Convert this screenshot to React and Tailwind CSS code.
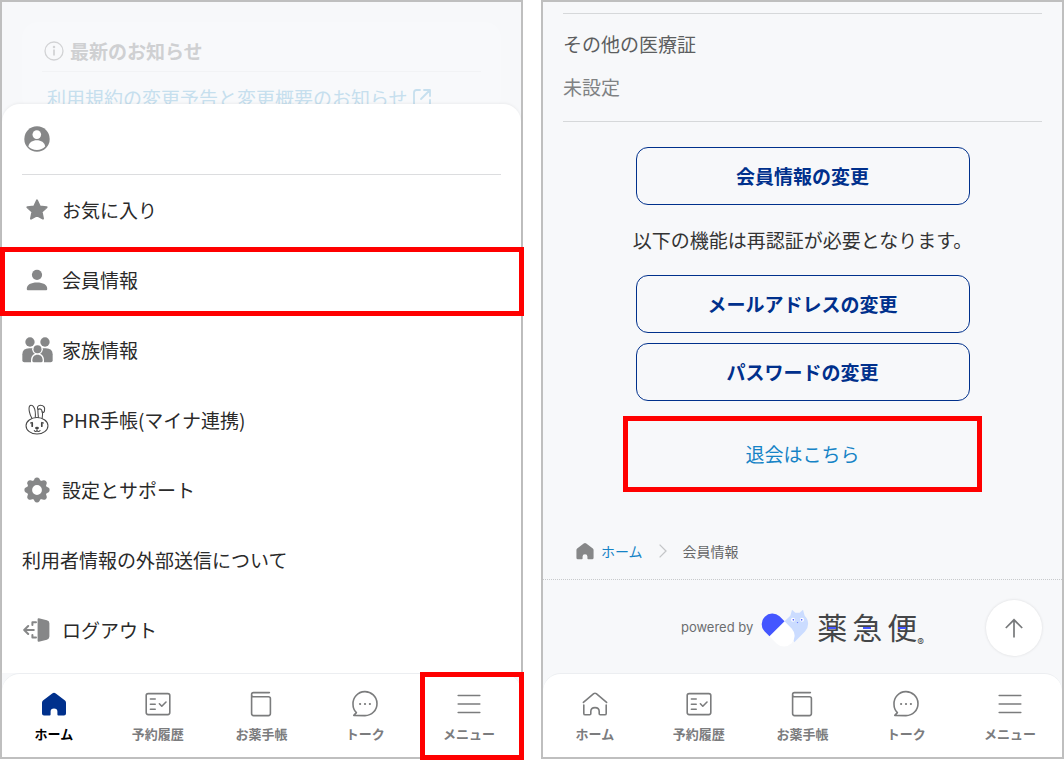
import { clsx } from "clsx";

/* Menu icons */
function AccountIcon() {
  return (
    <svg viewBox="0 0 28 28" className="w-7 h-7" fill="#868788">
      <circle cx="14" cy="14" r="12.7" />
      <circle cx="13.8" cy="9.6" r="4.3" fill="#fff" />
      <path d="M5.4 21.4C6 17.4 9.6 15.2 13.8 15.2S21.6 17.4 22.2 21.4C20.2 23.6 17.2 24.9 13.8 24.9S7.4 23.6 5.4 21.4Z" fill="#fff" />
    </svg>
  );
}

function StarIcon() {
  return (
    <svg viewBox="0 0 28 28" className="w-7 h-7" fill="#868788" stroke="#868788" strokeWidth="2" strokeLinejoin="round">
      <path d="M14 4.4L16.8 10.4L23.6 11.2L18.6 15.8L20 22.6L14 19.4L8 22.6L9.4 15.8L4.4 11.2L11.2 10.4Z" />
    </svg>
  );
}

function PersonIcon() {
  return (
    <svg viewBox="0 0 28 28" className="w-7 h-7" fill="#868788">
      <circle cx="14" cy="8.8" r="5.1" />
      <path d="M3.8 22.4C3.8 18.6 8 16.4 14 16.4S24.2 18.6 24.2 22.4V23.2Q24.2 24.2 23.2 24.2H4.8Q3.8 24.2 3.8 23.2Z" />
    </svg>
  );
}

function FamilyIcon() {
  return (
    <svg viewBox="0 0 93 78" className="w-[31px] h-[26px] shrink-0" fill="#868788">
      <circle cx="24" cy="15" r="14" />
      <circle cx="69" cy="15" r="14" />
      <path d="M1 70V52Q1 34 22 34H40V76H7Q1 76 1 70Z" />
      <path d="M92 70V52Q92 34 71 34H53V76H86Q92 76 92 70Z" />
      <circle cx="46.5" cy="37" r="16" fill="#fff" />
      <path d="M27 78V70C27 56 36 49 46.5 49S66 56 66 70V78Z" fill="#fff" />
      <circle cx="46.5" cy="37" r="12" />
      <path d="M31 71C31 59 37 53 46.5 53S62 59 62 71Q62 76 57 76H36Q31 76 31 71Z" />
    </svg>
  );
}

function RabbitIcon() {
  return (
    <svg viewBox="-2 -1 70 92" className="w-6 h-8" fill="none" stroke="#444" strokeWidth="3" strokeLinecap="round" strokeLinejoin="round">
      <path d="M18 40C11 28 8 12 11 5Q14 0 20 3C27 9 29 24 28 37" />
      <path d="M37 37C36 27 35 17 36 14Q44 10 47 17C50 24 50 32 48 40" />
      <path d="M36 14C32 8 36 2 43 2C52 2 57 8 55 17Q54 26 48 21" />
      <ellipse cx="33" cy="62" rx="32" ry="24" />
      <path d="M19 54V63M47 54V63" strokeWidth="5" />
      <path d="M14 54L19 52M47 52L52 54M33 70V75M25 76Q29 81 33 76Q37 81 42 76" />
      <ellipse cx="33" cy="68" rx="4" ry="2" fill="#444" />
    </svg>
  );
}

const teeth = [0, 45, 90, 135, 180, 225, 270, 315];

function GearIcon() {
  return (
    <svg viewBox="0 0 28 28" className="w-7 h-7" fill="#868788">
      {teeth.map((deg) => (
        <path key={deg} d="M9.8 6L11.8 2.4Q12.4 1.4 14 1.4T16.2 2.4L18.2 6Z" transform={`rotate(${deg} 14 14)`} />
      ))}
      <circle cx="14" cy="14" r="7.4" fill="none" stroke="#868788" strokeWidth="5" />
    </svg>
  );
}

function LogoutIcon() {
  return (
    <svg viewBox="0 0 28 28" className="w-7 h-7" fill="none" stroke="#868788" strokeWidth="2" strokeLinecap="round" strokeLinejoin="round">
      <path d="M10.8 14H1.6M5.2 10L1.2 14L5.2 18" />
      <path d="M9.4 9V6.2H13M9.4 19V21.6H13" />
      <path d="M15.6 3.2V24.8L23.6 22.8Q25.4 22.2 25.4 20.6V7.2Q25.4 5.6 23.6 5.1Z" fill="#868788" />
    </svg>
  );
}

/* Notice icons */
function InfoIcon() {
  return (
    <svg viewBox="0 0 20 20" className="w-5 h-5" fill="none" stroke="#d2d3d5" strokeWidth="1.3">
      <circle cx="10" cy="10" r="9" />
      <path d="M10 8.6V14.6" strokeWidth="1.8" />
      <circle cx="10" cy="6" r="0.6" />
    </svg>
  );
}

function ExternalIcon() {
  return (
    <svg viewBox="0 0 20 20" className="w-5 h-5" fill="none" stroke="#c6dfee" strokeWidth="1.8" strokeLinecap="round" strokeLinejoin="round">
      <path d="M8 2H4.5Q2 2 2 4.5V15.5Q2 18 4.5 18H15.5Q18 18 18 15.5V12" />
      <path d="M12 2H18V8M18 2L9 11" />
    </svg>
  );
}

/* Bottom navigation icons */
function HomeFillIcon({ className }) {
  return (
    <svg viewBox="0 0 28 28" className={className} fill="currentColor">
      <path d="M12.2 3.5Q14 2 15.8 3.5L25 10.6Q26 11.5 26 12.7V23.5Q26 25.6 24 25.6H18.4Q17.4 25.6 17.4 24.6V21.6Q17.4 18.4 14 18.4T10.6 21.6V24.6Q10.6 25.6 9.6 25.6H4Q2 25.6 2 23.5V12.7Q2 11.5 3 10.6Z" />
    </svg>
  );
}

const lineProps = {
  viewBox: "0 0 28 28",
  className: "w-7 h-7",
  fill: "none",
  stroke: "#7b7c7d",
  strokeWidth: "1.6",
  strokeLinecap: "round",
  strokeLinejoin: "round",
};

function HomeLineIcon() {
  return (
    <svg {...lineProps}>
      <path d="M2.4 12.4L12.7 3.7Q14 2.7 15.3 3.7L25.6 12.4" />
      <path d="M2.8 15V23.4Q2.8 24.8 4.2 24.8H8.8Q9.8 24.8 9.8 23.8V21.6Q9.8 17.6 14 17.6T18.2 21.6V23.8Q18.2 24.8 19.2 24.8H23.8Q25.2 24.8 25.2 23.4V15" />
    </svg>
  );
}

function HistoryIcon() {
  return (
    <svg {...lineProps}>
      <rect x="2.2" y="3.6" width="23.6" height="21" rx="2" />
      <path d="M6.4 9H11.2M6.4 14.2H11.2M6.4 19.2H11.2M15.4 13.8L17.8 16.2L22 12" />
    </svg>
  );
}

function NotebookIcon() {
  return (
    <svg {...lineProps}>
      <path d="M22.4 2.6H6.4Q4.6 2.6 4.6 4.6V23.6Q4.6 25.6 6.6 25.6H21.4Q23.4 25.6 23.4 23.6V8.6Q23.4 6.8 21.4 6.8H6.4Q4.6 6.8 4.6 4.8" />
    </svg>
  );
}

function TalkIcon() {
  return (
    <svg {...lineProps}>
      <path d="M2.8 25.4L5.4 22.6C3 20.4 2 17.4 2 14.2A12 12 0 1 1 14 25.6Z" />
      <path d="M9 14H9.2M13.9 14H14.1M18.8 14H19" strokeWidth="2" />
    </svg>
  );
}

function MenuIcon() {
  return (
    <svg {...lineProps}>
      <path d="M3.2 5.5H24.8M3.2 14H24.8M3.2 22.5H24.8" />
    </svg>
  );
}

function Mascot() {
  return (
    <svg viewBox="0 0 144 116" className="w-12 h-[39px]">
      <path d="M70 37L88 20L93 2L103 11H116L126 2L131 20A33 33 0 0 1 132 67L100 99Z" fill="#cbdcff" />
      <path d="M25.4 81.6L70.6 36.4L92.6 58.4A32 32 0 0 1 47.4 103.6Z" fill="#fff" />
      <path d="M25.4 81.6L10.4 66.6A32 32 0 0 1 55.6 21.4L70.6 36.4Z" fill="#4456ff" />
      <circle cx="96" cy="32" r="6" fill="#fff" />
      <circle cx="123" cy="32" r="6" fill="#fff" />
      <circle cx="97" cy="32" r="2.5" fill="#4456ff" />
      <circle cx="122" cy="32" r="2.5" fill="#4456ff" />
      <path d="M107 39H112L109.5 42Z" fill="#4456ff" />
    </svg>
  );
}

const menuItems = [
  { label: "お気に入り", Icon: StarIcon },
  { label: "会員情報", Icon: PersonIcon, marked: true },
  { label: "家族情報", Icon: FamilyIcon },
  { label: "PHR手帳(マイナ連携)", Icon: RabbitIcon },
  { label: "設定とサポート", Icon: GearIcon },
  { label: "利用者情報の外部送信について" },
  { label: "ログアウト", Icon: LogoutIcon },
];

const tabs = [
  { label: "ホーム", Icon: HomeLineIcon },
  { label: "予約履歴", Icon: HistoryIcon },
  { label: "お薬手帳", Icon: NotebookIcon },
  { label: "トーク", Icon: TalkIcon },
  { label: "メニュー", Icon: MenuIcon },
];

function BottomNav({ homeActive, markMenu }) {
  return (
    <nav className="relative mt-auto grid grid-cols-5 h-[84px] bg-white border-t border-[#eceef1] rounded-t-[18px]">
      {tabs.map(({ label, Icon }, i) => {
        const active = homeActive && i === 0;
        return (
          <a
            key={label}
            href="#"
            className={clsx(
              "relative flex flex-col items-center gap-1 pt-4 text-[13px] leading-6 font-bold whitespace-nowrap",
              active ? "text-black" : "text-[#7b7c7e]"
            )}
          >
            {active ? <HomeFillIcon className="w-7 h-7 text-[#00308c]" /> : <Icon />}
            {label}
            {markMenu && i === 4 && (
              <span className="absolute left-[3px] -right-[3px] -top-[2px] -bottom-[3px] border-5 border-[#ff0000]" />
            )}
          </a>
        );
      })}
    </nav>
  );
}

function OutlineButton({ children }) {
  return (
    <button
      type="button"
      className="w-[334px] h-[58px] rounded-xl border border-[#00308c] text-[19px] leading-7 font-bold text-[#00308c]"
    >
      {children}
    </button>
  );
}

function MenuScreen() {
  return (
    <section className="flex flex-col border-2 border-[#bfbfbf] bg-[#f7f8fa]">
      {/* Dimmed notice, partly under the sheet */}
      <div className="h-[102px] px-5 pt-5">
        <div className="rounded-2xl bg-[#f8f9fb] px-5 pt-[9px]">
          <h2 className="flex items-center gap-[6px] h-[41px] border-b border-[#f2f3f5] pl-[2px] text-[19px] leading-7 font-bold text-[#cfd0d2]">
            <InfoIcon />
            最新のお知らせ
          </h2>
          <a href="#" className="mt-3 flex items-center gap-1 pl-[5px] text-[19px] leading-7 text-[#c6dfee] whitespace-nowrap">
            利用規約の変更予告と変更概要のお知らせ
            <ExternalIcon />
          </a>
        </div>
      </div>

      {/* Menu sheet */}
      <div className="relative rounded-t-[18px] bg-white px-5 pb-2 shadow-[0_-1px_3px_rgba(0,0,0,0.05)]">
        <div className="h-[71px] border-b border-[#dcdddf] flex items-center pl-[1px]">
          <AccountIcon />
        </div>
        <ul>
          {menuItems.map(({ label, Icon, marked }) => (
            <li key={label} className="relative">
              <a href="#" className="flex items-center gap-[10px] h-[70px] text-[19px] leading-7 text-[#2a2a2a]">
                {Icon && (
                  <span className="w-[30px] flex justify-center shrink-0">
                    <Icon />
                  </span>
                )}
                {label}
              </a>
              {marked && (
                <span className="pointer-events-none absolute -left-[22px] -right-[23px] top-[2px] -bottom-[1px] border-5 border-[#ff0000]" />
              )}
            </li>
          ))}
        </ul>
      </div>

      <BottomNav homeActive markMenu />
    </section>
  );
}

function LogoChar({ children }) {
  return (
    <span className="relative">
      {children}
      <span className="absolute left-[11px] top-[21px] w-2 h-[2px] bg-[#4456ff]" />
    </span>
  );
}

function MemberScreen() {
  return (
    <section className="flex flex-col border-2 border-[#bfbfbf] bg-[#f7f8fa]">
      <div className="px-5 pt-[11px]">
        <dl className="border-y border-[#d6d8da] pt-4 pb-5 text-[19px] leading-7">
          <dt className="text-[#5c5e60]">その他の医療証</dt>
          <dd className="mt-[15px] text-[#808284]">未設定</dd>
        </dl>
      </div>

      <div className="mt-[25px] flex flex-col items-center">
        <OutlineButton>会員情報の変更</OutlineButton>
        <p className="my-[21px] text-[19px] leading-7 text-[#333] whitespace-nowrap">以下の機能は再認証が必要となります。</p>
        <div className="flex flex-col gap-[10px]">
          <OutlineButton>メールアドレスの変更</OutlineButton>
          <OutlineButton>パスワードの変更</OutlineButton>
        </div>
        <a
          href="#"
          className="mt-[15px] flex items-center justify-center w-[359px] h-[76px] border-5 border-[#ff0000] text-[19px] leading-7 text-[#1583c6]"
        >
          退会はこちら
        </a>
      </div>

      <nav className="mt-[45px] mb-[14px] flex items-center pl-8 text-sm leading-7">
        <a href="#" className="flex items-center gap-[6px] text-[#1583c6]">
          <HomeFillIcon className="w-5 h-5 text-[#868788]" />
          ホーム
        </a>
        <svg viewBox="0 0 8 14" className="mx-4 w-2 h-[14px]" fill="none" stroke="#c4c6c8" strokeWidth="1.3">
          <path d="M0.6 0.6L7 7L0.6 13.4" />
        </svg>
        <span className="text-[#666768]">会員情報</span>
      </nav>

      <footer className="relative border-t border-dotted border-[#c8cacc] pt-5 pb-4">
        <div className="flex items-center justify-center h-14">
          <span className="font-['Inter'] text-[13px] text-[#6b6d6f]">powered by</span>
          <span className="ml-2">
            <Mascot />
          </span>
          <span className="ml-2 pb-1 flex gap-[5px] text-[30px] leading-10 text-[#444648]">
            <LogoChar>薬</LogoChar>
            <LogoChar>急</LogoChar>
            <LogoChar>便</LogoChar>
          </span>
          <span className="self-end pb-2 font-['Inter'] text-[10px] leading-3 text-[#444648]">®</span>
        </div>
        <button
          type="button"
          aria-label="ページの先頭へ"
          className="absolute right-5 top-5 w-14 h-14 rounded-full bg-white flex items-center justify-center shadow-[0_0_3px_rgba(0,0,0,0.12)]"
        >
          <svg viewBox="0 0 20 20" className="w-5 h-5" fill="none" stroke="#77797b" strokeWidth="1.7">
            <path d="M10 19.5V1.8M1.8 10L10 1.8L18.2 10" />
          </svg>
        </button>
      </footer>

      <BottomNav />
    </section>
  );
}

export default function App() {
  return (
    <main
      lang="ja"
      className="grid grid-cols-2 gap-[18px] min-h-screen bg-white pb-px font-['Noto_Sans_CJK_JP',sans-serif]"
    >
      <MenuScreen />
      <MemberScreen />
    </main>
  );
}
